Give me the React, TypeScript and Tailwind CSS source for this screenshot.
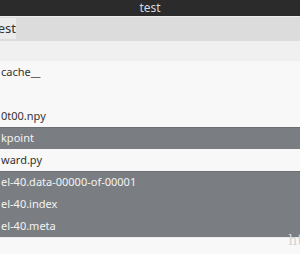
// list is scrolled sideways, so only the tail of each name shows
const ROWS = [
  { name: "cache__", selected: false },
  { name: "", selected: false },
  { name: "0t00.npy", selected: false },
  { name: "kpoint", selected: true },
  { name: "ward.py", selected: false },
  { name: "el-40.data-00000-of-00001", selected: true },
  { name: "el-40.index", selected: true },
  { name: "el-40.meta", selected: true },
];

export default function App() {
  return (
    <div className="relative h-[254px] w-[300px] overflow-hidden bg-[#f8f8f8] font-['Noto_Sans',sans-serif]">
      <header className="flex h-4 items-center justify-center bg-[#2b2b2b] text-[12px] leading-none text-[#d8d8d8]">
        test
      </header>
      <div className="h-px bg-[#ededed]" />

      <div className="h-6 bg-[#dcdcdc] pt-px">
        <button className="flex h-[21px] w-4 items-center justify-end overflow-hidden bg-[#ebebeb] text-[13px] text-[#333]">
          test
        </button>
      </div>

      <div className="h-5 bg-[#f0f0f0]" />

      <ul className="text-[11px]">
        {ROWS.map((row, i) => {
          const prevSel = i > 0 && ROWS[i - 1].selected;
          return (
            <li
              key={i}
              className={[
                "flex h-[22px] items-center overflow-hidden whitespace-nowrap pl-px",
                row.selected ? "bg-[#7a7e82] text-[#f3f3f3]" : "text-[#333]",
                row.selected && !prevSel ? "border-t border-[#6b6f73]" : "",
              ].join(" ")}
            >
              {row.name}
            </li>
          );
        })}
      </ul>
      <div className="h-px bg-[#ececec]" />

      <span className="absolute bottom-[3px] right-[-3px] font-['DejaVu_Serif',serif] text-[14px] text-[#d4d4d4]">
        ht
      </span>
    </div>
  );
}
